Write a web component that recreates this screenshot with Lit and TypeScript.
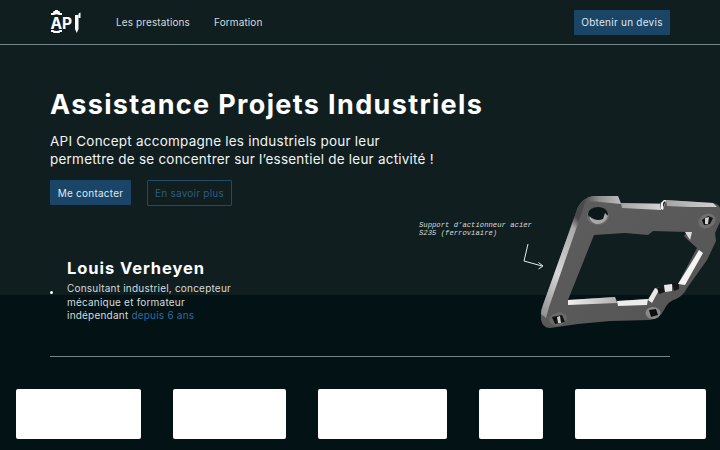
import { LitElement, html, css, svg } from "lit";
import { customElement } from "lit/decorators.js";

const partWidths = [125, 113, 129, 64, 131];

const plate = svg`
  <defs>
    <linearGradient id="face" x1="0" y1="0" x2="1" y2="1">
      <stop offset="0" stop-color="#5e5e5e"/><stop offset="1" stop-color="#545454"/>
    </linearGradient>
    <linearGradient id="edge" x1="0" y1="1" x2="0.35" y2="0">
      <stop offset="0" stop-color="#8b8b8b"/><stop offset="0.45" stop-color="#d6d6d6"/><stop offset="0.9" stop-color="#a8a8a8"/><stop offset="1" stop-color="#4a4a4a"/>
    </linearGradient>
    <linearGradient id="band" x1="0" y1="0" x2="1" y2="0">
      <stop offset="0" stop-color="#f0f0f0"/><stop offset="1" stop-color="#b0b0b0"/>
    </linearGradient>
    <linearGradient id="topband" x1="0" y1="0" x2="1" y2="0">
      <stop offset="0" stop-color="#a4a4a4"/><stop offset="1" stop-color="#d4d4d4"/>
    </linearGradient>
    <linearGradient id="corner" x1="0" y1="0" x2="1" y2="0">
      <stop offset="0" stop-color="#4c4c4c"/><stop offset="0.4" stop-color="#8e8e8e"/><stop offset="1" stop-color="#bdbdbd"/>
    </linearGradient>
  </defs>
  <path fill="url(#face)" fill-rule="evenodd" d="M578 207 Q583 198 592 196 L618 196 L621 203 L660 203 L664 200 L713 203 Q719 204 720 208 L720 222 L715 233 L716 241 L707 260 L687 288 Q683 296 676 299 Q668 301 664 310 Q660 318 650 320 L610 321 L578 324 L550 328 Q543 328 541 320 L541 313 Q541 310 543 305 Z
    M594 235 L625 233 L648 235 L653 231 L687 232 L684 236 L688 240 L697 248 L678 284 L655 288 L648 299 L617 301 L615 297 L568 300 Z"/>
  <path fill="url(#edge)" d="M541 314 Q541 310 543 305 L578 207 Q581 202 586 199 L583 209 L549 307 L546 318 Z"/>
  <path fill="url(#corner)" d="M584 200 Q588 197 593 196 L618 196 L621 204 L600 202 Q590 200 584 204 Z"/>
  <path fill="url(#topband)" d="M621 203 L660 204 L661 210 L622 208 Z"/>
  <path fill="url(#topband)" d="M666 200 L713 203 L717 207 L690 207 L667 206 Z"/>
  <path fill="#f2f2f2" d="M661 203 L664 200 L666 200 L663 210 L661 209 Z"/>
  <path fill="#2a2a2a" d="M663 203 L665 201 L665 203 L663 208 Z"/>
  <path fill="url(#band)" d="M568 300 L615 297 L617 303 L568 305 Z"/>
  <path fill="#ececec" d="M617 301 L648 299 L647 305 L618 306 Z"/>
  <path fill="#e8e8e8" d="M648 300 L655 288 L659 290 L652 303 Z"/>
  <path fill="#161616" d="M657 288 L664 286 L665 292 L659 294 Z"/>
  <path fill="#e6e6e6" d="M664 285 L672 284 L672 291 L665 292 Z"/>
  <path fill="#161616" d="M672 283 L679 283 L679 289 L674 291 Z"/>
  <path fill="#f4f4f4" d="M678 284 L693 260 L699 250 L703 253 L685 285 Z"/>
  <path fill="#dcdcdc" d="M685 232 L692 232 L690 240 Z"/>

  <ellipse cx="598" cy="216" rx="11" ry="9" fill="#6e6e6e"/>
  <ellipse cx="598" cy="214" rx="10" ry="7" fill="#0c1719"/>
  <path fill="#a8a8a8" d="M589 216 Q596 222 603 219 L605 213 L608 216 Q604 225 596 224 Q590 222 589 216 Z"/>

  <ellipse cx="707" cy="221" rx="9" ry="7" fill="#6e6e6e" transform="rotate(-25 707 221)"/>
  <path fill="#111" d="M702 220 L708 216 L713 218 L710 224 L704 225 Z"/>
  <path fill="#d0d0d0" d="M705 218 L709 217 L708 224 L705 224 Z"/>

  <ellipse cx="558" cy="319" rx="9" ry="6.500" fill="#6a6a6a" transform="rotate(-12 558 319)"/>
  <path fill="#111" d="M552 317 L562 315 L565 322 L555 324 Z"/>
  <path fill="#cfcfcf" d="M557 317 L560 316 L561 323 L558 323 Z"/>

  <ellipse cx="653" cy="313" rx="7.500" ry="6" fill="#8a8a8a"/>
  <path fill="#0d0d0d" d="M649 310 L656 309 L658 315 L651 317 Z"/>

  <path fill="none" stroke="#e6ecec" stroke-width="1" d="M528 244 L524 261 L542 266 M538.500 262.500 L543 266 L538.500 269"/>
`;

@customElement("app-root")
export class AppRoot extends LitElement {
  static styles = css`
    :host {
      display: block;
      position: relative;
      height: 450px;
      overflow: hidden;
      color: #fff;
      font-family: Inter, "Noto Sans", sans-serif;
      background: linear-gradient(#101e20 0 295px, #031215 295px);
    }
    a { color: inherit; text-decoration: none; }
    .topbar {
      display: flex;
      align-items: center;
      height: 44px;
      padding: 0 50px;
      border-bottom: 1px solid #73878a;
    }
    .logo { display: block; width: 32px; height: 26px; margin-right: 34px; }
    .logo text { font: 700 15.500px Inter, sans-serif; fill: #fff; }
    .nav { display: flex; gap: 24px; flex: 1; font-size: 10px; letter-spacing: 0.12px; color: #d4dcdc; }
    .btn {
      display: flex;
      align-items: center;
      justify-content: center;
      box-sizing: border-box;
      height: 25px;
      border-radius: 1px;
      font-size: 10px;
      letter-spacing: 0.25px;
    }
    .btn.solid { background: #1b4567; color: #dfe8ee; }
    .btn.ghost { border: 1px solid #1f4a68; color: #2e5c7c; height: 26px; }
    .quote { width: 96px; color: #bdd0de; }
    .hero { padding: 44px 50px 0; }
    h1 { margin: 0; font-size: 27px; line-height: 32px; font-weight: 700; letter-spacing: 1.35px; }
    .lead { margin: 11px 0 0; font-size: 13.500px; line-height: 18px; letter-spacing: 0.22px; color: #f0f4f4; }
    .actions { display: flex; gap: 16px; margin-top: 12px; }
    .actions .solid { width: 81px; }
    .actions .ghost { width: 85px; }
    .people { list-style: none; margin: 52px 0 0; padding: 0; }
    .person { display: flex; align-items: center; gap: 14px; }
    .dot { width: 3px; height: 3px; border-radius: 50%; background: #fff; margin-top: 4px; }
    .person h2 { margin: 0 0 4px; font-size: 16.500px; line-height: 20px; font-weight: 700; letter-spacing: 0.93px; }
    .person p { margin: 0; font-size: 10px; line-height: 13.500px; letter-spacing: 0.21px; color: #d4dcdc; white-space: nowrap; }
    .person em { font-style: normal; color: #2f6c9c; }
    .divider { height: 1px; margin: 33px 50px 0; background: #73858a; }
    .clients { display: flex; gap: 32px; margin-top: 32px; padding-left: 16px; }
    .client { height: 50px; border-radius: 2px; background: #fff; }
    .figure { position: absolute; left: 410px; top: 190px; width: 310px; height: 145px; display: block; }
    .caption {
      position: absolute;
      left: 419px;
      top: 221px;
      margin: 0;
      font: italic 7.200px/8px "Liberation Mono", monospace;
      letter-spacing: 0.03px;
      color: #d5dddd;
      white-space: pre;
    }
  `;

  render() {
    return html`
      <header class="topbar">
        <svg class="logo" viewBox="50 9 32 26" role="img" aria-label="API">
          <text x="50.500" y="29">AP</text>
          <path fill="#fff" d="M51 15 V13 H53 L53.500 11 H55 V10 H58 V11 H59.500 L60 13 H62 V15 L59 15 Q56.500 13.500 54 15 Z"/>
          <path fill="#fff" d="M51 30 H53 Q56.500 32 60 30 H62 V32 H60 L59.500 33 H53.500 L53 32 H51 Z"/>
          <path fill="#fff" d="M75 15 H78.500 V29 L76.800 33 L75 29 Z"/>
          <path fill="#fff" d="M78.500 13.500 L80.500 12.500 V18 H78.500 Z"/>
        </svg>
        <nav class="nav"><a href="#">Les prestations</a><a href="#">Formation</a></nav>
        <a class="btn solid quote" href="#">Obtenir un devis</a>
      </header>
      <main>
        <section class="hero">
          <h1>Assistance Projets Industriels</h1>
          <p class="lead">API Concept accompagne les industriels pour leur<br />permettre de se concentrer sur l’essentiel de leur activité !</p>
          <div class="actions">
            <a class="btn solid" href="#">Me contacter</a>
            <a class="btn ghost" href="#">En savoir plus</a>
          </div>
          <ul class="people">
            <li class="person">
              <span class="dot"></span>
              <div>
                <h2>Louis Verheyen</h2>
                <p>Consultant industriel, concepteur<br />mécanique et formateur<br />indépendant <em>depuis 6 ans</em></p>
              </div>
            </li>
          </ul>
        </section>
        <div class="divider"></div>
        <div class="clients">
          ${partWidths.map((w) => html`<div class="client" style="width:${w}px"></div>`)}
        </div>
      </main>
      <svg class="figure" viewBox="410 190 310 145">${plate}</svg>
      <p class="caption">Support d’actionneur acier
S235 (ferroviaire)</p>
    `;
  }
}
